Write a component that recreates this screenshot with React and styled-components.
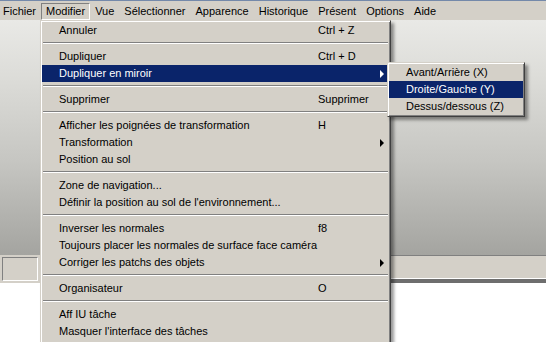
import styled, { createGlobalStyle } from "styled-components"

const GlobalStyle = createGlobalStyle`
    html, body {
        margin: 0;
        padding: 0;
        overflow: hidden;
        background: #fff;
    }
    * {
        box-sizing: border-box;
    }
`

const Window = styled.div`
    position: relative;
    width: 546px;
    height: 342px;
    overflow: hidden;
    display: flex;
    flex-direction: column;
    font-family: "Liberation Sans", Arial, sans-serif;
    font-size: 11px;
    color: #000;
    background: #fff;
`

const TitleEdge = styled.div`
    height: 1px;
    background: #7489aa;
`

const MenuBar = styled.div`
    height: 19px;
    display: flex;
    align-items: center;
    background: #d4d0c8;
`

const BarItem = styled.div`
    height: 17px;
    line-height: 15px;
    padding: 0 4px 0 ${({ $edge }) => $edge ? "2px" : "4px"};
    border: 1px solid ${({ $open }) => $open ? "#808080" : "transparent"};
    border-right-color: ${({ $open }) => $open ? "#fff" : "transparent"};
    border-bottom-color: ${({ $open }) => $open ? "#fff" : "transparent"};
    margin-top: 1px;
`

const Workspace = styled.div`
    height: 235px;
    background: linear-gradient(180deg, #e9e9e6 0%, #dcdcd8 25%, #c6c6c2 60%, #a4a4a0 100%);
`

const StatusBar = styled.div`
    height: 28px;
    display: flex;
    background: #d4d0c8;
`

const StatusBox = styled.div`
    width: 36px;
    height: 24px;
    margin: 2px 2px 0 2px;
    border: 1px solid #808080;
    border-right-color: #fff;
    border-bottom-color: #fff;
    background: #d4d0c8;
`

const StatusPanel = styled.div`
    flex: 1;
    border-top: 1px solid #808080;
    border-bottom: 4px solid #6e6e6e;
    box-shadow: inset 0 -1px 0 #fff;
`

const Blank = styled.div`
    flex: 1;
    background: #fff;
`

const Menu = styled.div`
    position: absolute;
    top: ${({ $top }) => $top}px;
    left: ${({ $left }) => $left}px;
    width: ${({ $width }) => $width}px;
    padding: 1px 1px 1px 0;
    background: #d4d0c8;
    border: 1px solid #d4d0c8;
    border-right-color: #404040;
    border-bottom-color: #404040;
    box-shadow: inset 1px 1px 0 #fff, inset -1px -1px 0 #808080, 3px 3px 3px rgba(0, 0, 0, 0.4);
    z-index: ${({ $z }) => $z};
`

const Item = styled.div`
    display: grid;
    grid-template-columns: ${({ $cols }) => $cols};
    align-items: center;
    height: 17px;
    line-height: 17px;
    padding-left: 17px;
    margin-left: 1px;
    white-space: nowrap;
    background: ${({ $active }) => $active ? "#0a246a" : "transparent"};
    color: ${({ $active }) => $active ? "#fff" : "#000"};
`

const Arrow = styled.span`
    justify-self: start;
    margin-left: 3px;
    width: 0;
    height: 0;
    border-left: 4px solid ${({ $active }) => $active ? "#fff" : "#000"};
    border-top: 4px solid transparent;
    border-bottom: 4px solid transparent;
`

const Separator = styled.div`
    height: 9px;
    padding: 3px 1px 0 2px;

    div {
        height: 2px;
        border-top: 1px solid #808080;
        border-bottom: 1px solid #fff;
    }
`

const menuBar = ["Fichier", "Modifier", "Vue", "Sélectionner", "Apparence", "Historique", "Présent", "Options", "Aide"]

const editMenu = [
    { label: "Annuler", key: "Ctrl + Z" },
    "sep",
    { label: "Dupliquer", key: "Ctrl + D" },
    { label: "Dupliquer en miroir", sub: true, active: true },
    "sep",
    { label: "Supprimer", key: "Supprimer" },
    "sep",
    { label: "Afficher les poignées de transformation", key: "H" },
    { label: "Transformation", sub: true },
    { label: "Position au sol" },
    "sep",
    { label: "Zone de navigation..." },
    { label: "Définir la position au sol de l'environnement..." },
    "sep",
    { label: "Inverser les normales", key: "f8" },
    { label: "Toujours placer les normales de surface face caméra" },
    { label: "Corriger les patchs des objets", sub: true },
    "sep",
    { label: "Organisateur", key: "O" },
    "sep",
    { label: "Aff IU tâche" },
    { label: "Masquer l'interface des tâches" },
    { label: "" },
]

const mirrorMenu = [
    { label: "Avant/Arrière (X)" },
    { label: "Droite/Gauche (Y)", active: true },
    { label: "Dessus/dessous (Z)" },
]

const App = () => {
    return (
        <>
            <GlobalStyle />
            <Window>
                <TitleEdge />
                <MenuBar>
                    {menuBar.map((m, i) => (
                        <BarItem key={m} $edge={i === 0} $open={m === "Modifier"}>{m}</BarItem>
                    ))}
                </MenuBar>
                <Workspace />
                <StatusBar>
                    <StatusBox />
                    <StatusPanel />
                </StatusBar>
                <Blank />

                <Menu $top={20} $left={40} $width={351} $z={1}>
                    {editMenu.map((it, i) => it === "sep" ? (
                        <Separator key={i}><div /></Separator>
                    ) : (
                        <Item key={i} $cols="259px 1fr 12px" $active={it.active}>
                            <span>{it.label}</span>
                            <span>{it.key}</span>
                            {it.sub ? <Arrow $active={it.active} /> : <span />}
                        </Item>
                    ))}
                </Menu>

                <Menu $top={62} $left={387} $width={138} $z={2}>
                    {mirrorMenu.map((it) => (
                        <Item key={it.label} $cols="1fr" $active={it.active}>
                            <span>{it.label}</span>
                        </Item>
                    ))}
                </Menu>
            </Window>
        </>
    )
}

export default App
